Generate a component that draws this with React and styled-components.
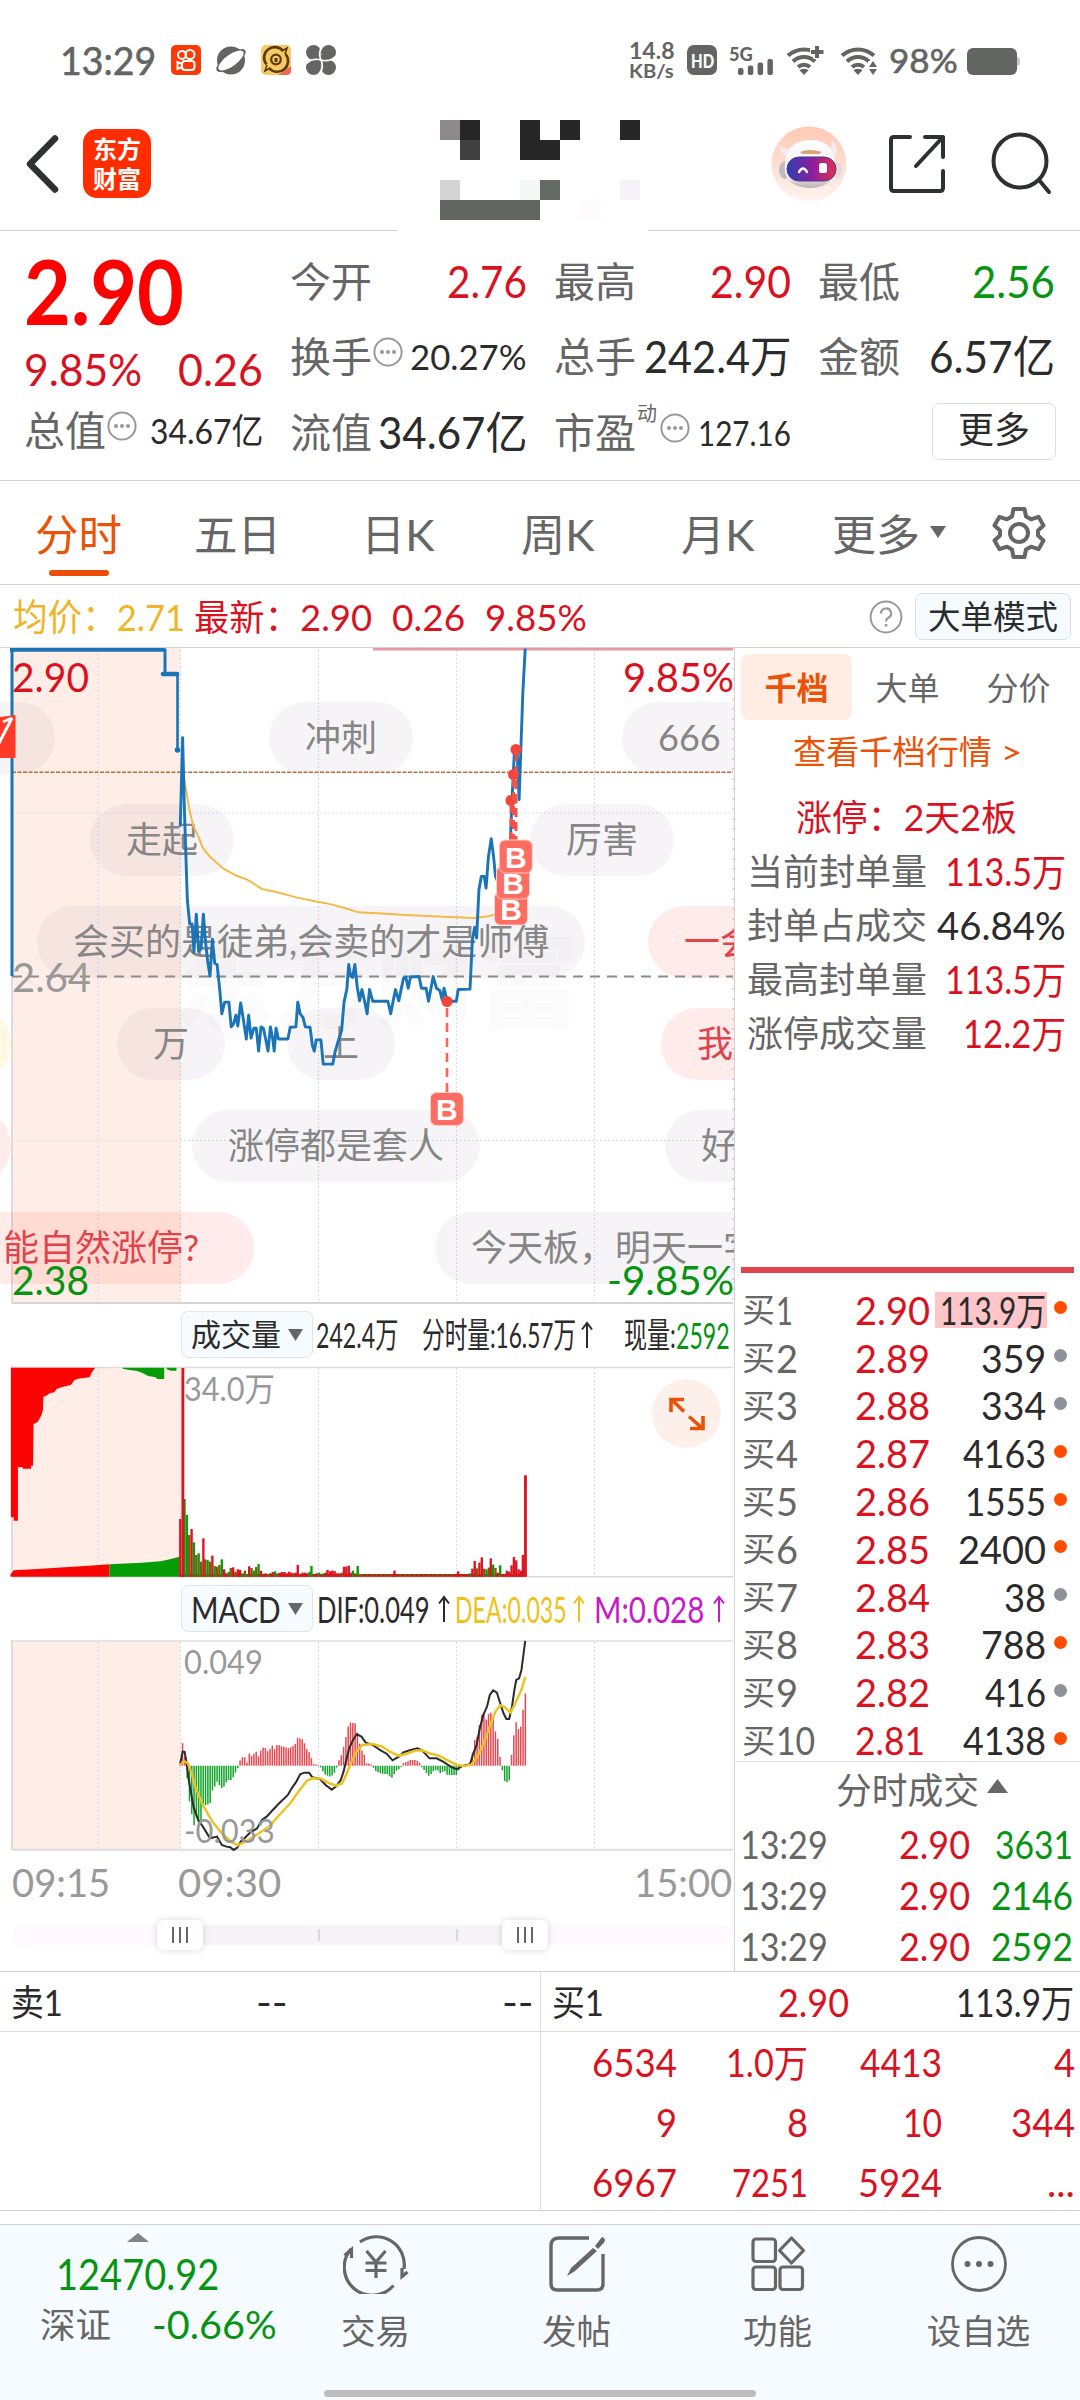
import React, { useLayoutEffect, useRef, useState } from "react";
import styled, { createGlobalStyle } from "styled-components";

const RED = "#d9121f";
const GREEN = "#069412";
const GRAY = "#666666";
const DARK = "#2b2b2b";
const ORANGE = "#ea5207";
const YELLOW = "#f0b429";
const LINE = "#d2d2d2";

// price chart, plotted on a 1568 x 1568 grid
const PRICE = [
  [382, 430], [387, 225], [391, 400], [397, 600], [402, 655], [407, 655], [411, 720], [416, 632], [421, 718],
  [426, 712], [431, 632], [435, 690], [440, 740], [445, 775], [450, 690], [455, 745], [460, 748], [466, 810],
  [470, 862], [476, 835], [485, 835], [490, 892], [495, 885], [500, 865], [504, 890], [510, 837], [515, 870],
  [522, 920], [527, 865], [532, 918], [538, 895], [543, 895], [548, 948], [553, 892], [558, 895], [563, 920],
  [568, 948], [573, 892], [578, 920], [581, 948], [585, 895], [590, 920], [610, 920], [615, 893], [627, 892],
  [631, 835], [636, 862], [642, 870], [647, 892], [657, 893], [662, 935], [666, 948], [670, 922], [680, 922],
  [685, 978], [705, 978], [710, 950], [718, 920], [724, 900], [729, 835], [735, 805], [739, 748], [743, 775],
  [747, 778], [752, 748], [757, 800], [762, 832], [767, 806], [773, 835], [778, 862], [783, 806], [790, 833],
  [822, 833], [828, 862], [833, 833], [838, 806], [845, 832], [855, 780], [860, 777], [865, 803], [870, 777],
  [888, 776], [893, 803], [903, 803], [908, 833], [913, 805], [918, 776], [925, 803], [932, 808], [937, 830],
  [941, 803], [948, 833], [967, 833], [971, 806], [996, 805], [1001, 690], [1006, 662], [1010, 687], [1015, 575],
  [1020, 545], [1026, 545], [1030, 572], [1035, 500], [1041, 458], [1046, 500], [1050, 545], [1056, 560],
  [1062, 632], [1070, 632], [1078, 560], [1085, 370], [1090, 258], [1096, 258], [1100, 368], [1108, 120], [1113, 20],
];
const AVERAGE = [
  [387, 300], [395, 350], [402, 395], [410, 430], [420, 452], [430, 480], [445, 500], [472, 526], [500, 543],
  [525, 553], [555, 574], [585, 581], [630, 594], [670, 603], [700, 609], [730, 618], [760, 628], [800, 630],
  [860, 634], [940, 638], [1005, 641], [1035, 637], [1060, 630],
];
const DIF = [
  [382, 550], [387, 515], [391, 515], [395, 545], [400, 600], [410, 680], [420, 720], [430, 740], [445, 775],
  [460, 770], [470, 795], [480, 800], [488, 802], [495, 810], [503, 803], [510, 785], [518, 775], [530, 758],
  [545, 745], [555, 720], [565, 710], [578, 690], [590, 672], [610, 645], [618, 625], [628, 605], [636, 583],
  [645, 578], [655, 578], [662, 592], [678, 597], [690, 615], [703, 629], [712, 620], [722, 600], [728, 575],
  [733, 545], [740, 505], [748, 480], [756, 463], [766, 470], [775, 488], [790, 495], [805, 510], [820, 522],
  [832, 541], [845, 530], [855, 517], [870, 510], [885, 505], [895, 512], [910, 535], [925, 535], [940, 546],
  [955, 560], [968, 568], [980, 558], [996, 553], [1003, 520], [1010, 495], [1016, 450], [1024, 405], [1032, 380],
  [1038, 345], [1045, 331], [1053, 338], [1060, 370], [1067, 400], [1073, 417], [1079, 417], [1085, 380],
  [1090, 330], [1094, 300], [1100, 295], [1105, 270], [1113, 183],
];
const DEA = [
  [382, 555], [390, 543], [398, 550], [405, 575], [415, 625], [430, 675], [450, 725], [470, 760], [490, 785],
  [503, 796], [520, 785], [540, 768], [570, 740], [590, 708], [615, 670], [635, 630], [650, 603], [662, 595],
  [680, 596], [695, 608], [712, 617], [725, 610], [735, 580], [745, 545], [755, 515], [768, 495], [790, 492],
  [810, 500], [830, 518], [845, 527], [860, 522], [880, 512], [895, 511], [910, 520], [930, 527], [950, 542],
  [968, 555], [985, 558], [1000, 553], [1015, 520], [1025, 490], [1040, 430], [1050, 395], [1060, 376],
  [1070, 382], [1082, 398], [1090, 375], [1100, 345], [1106, 325], [1113, 291],
];
const HIST = [
  [382, 545], [387, 488], [391, 520], [395, 570], [401, 660], [406, 700], [411, 737], [416, 712], [421, 730],
  [426, 722], [431, 680], [436, 675], [445, 672], [450, 632], [455, 620], [460, 605], [466, 618], [470, 625],
  [476, 618], [482, 600], [490, 600], [495, 590], [500, 575], [505, 562], [508, 543], [513, 532], [518, 530],
  [523, 550], [528, 520], [533, 528], [543, 515], [548, 530], [553, 510], [560, 500], [568, 515], [577, 497],
  [583, 510], [587, 494], [600, 500], [612, 505], [622, 497], [627, 490], [631, 472], [636, 476], [641, 478],
  [646, 492], [651, 510], [656, 518], [660, 535], [664, 552], [678, 556], [680, 565], [684, 573], [690, 585],
  [700, 590], [706, 585], [712, 570], [716, 550], [720, 535], [725, 520], [729, 495], [734, 465], [739, 432],
  [744, 426], [749, 430], [753, 430], [757, 455], [762, 490], [767, 512], [772, 525], [776, 550], [785, 551],
  [790, 560], [795, 572], [805, 580], [815, 582], [823, 583], [829, 597], [834, 585], [840, 572], [848, 565],
  [852, 555], [857, 545], [862, 548], [867, 540], [880, 540], [888, 545], [893, 560], [900, 572], [908, 588],
  [915, 580], [920, 570], [930, 572], [935, 585], [940, 568], [948, 585], [968, 585], [975, 560], [985, 556],
  [995, 550], [1000, 530], [1005, 480], [1010, 478], [1015, 440], [1020, 405], [1026, 402], [1030, 420],
  [1035, 402], [1041, 398], [1046, 420], [1050, 455], [1055, 478], [1060, 535], [1065, 575], [1070, 607],
  [1075, 607], [1080, 600], [1084, 525], [1089, 465], [1094, 425], [1098, 448], [1103, 445], [1108, 393], [1113, 343],
];
// x, top, colour (r = red, g = green, o = mixed)
const VOLUME = [
  [382, 657, "r"], [391, 597, "g"], [396, 645, "g"], [401, 705, "o"], [406, 687, "r"], [411, 727, "g"],
  [416, 765, "o"], [421, 760, "g"], [426, 785, "o"], [431, 715, "r"], [435, 778, "o"], [440, 780, "g"],
  [445, 785, "o"], [450, 767, "r"], [455, 798, "g"], [460, 800, "o"], [465, 795, "o"], [470, 778, "g"],
  [475, 808, "r"], [480, 820, "r"], [485, 816, "g"], [489, 804, "o"], [494, 802, "r"], [499, 815, "o"],
  [504, 808, "r"], [509, 810, "r"], [514, 820, "g"], [519, 812, "o"], [524, 822, "g"], [528, 799, "r"],
  [533, 804, "o"], [538, 812, "g"], [543, 801, "o"], [548, 792, "g"], [553, 812, "r"], [558, 822, "r"],
  [563, 820, "r"], [568, 822, "g"], [573, 820, "r"], [578, 816, "r"], [583, 814, "g"], [588, 820, "o"],
  [593, 818, "r"], [598, 816, "r"], [603, 816, "r"], [608, 820, "r"], [613, 815, "r"], [618, 818, "r"],
  [623, 820, "o"], [627, 818, "r"], [631, 795, "r"], [636, 822, "r"], [641, 818, "r"], [646, 818, "r"],
  [651, 820, "r"], [656, 816, "g"], [660, 798, "g"], [666, 822, "r"], [671, 820, "r"], [676, 818, "g"],
  [681, 822, "r"], [686, 820, "g"], [690, 818, "r"], [694, 810, "r"], [699, 814, "r"], [704, 812, "r"],
  [709, 813, "r"], [714, 820, "r"], [719, 820, "r"], [724, 818, "o"], [729, 800, "r"], [734, 800, "r"],
  [739, 797, "r"], [743, 818, "r"], [748, 812, "g"], [753, 820, "r"], [758, 798, "g"], [763, 822, "o"],
  [832, 822, "r"], [836, 812, "r"], [966, 822, "r"], [971, 814, "r"], [990, 822, "r"], [996, 820, "g"],
  [1001, 806, "r"], [1006, 783, "r"], [1011, 805, "o"], [1016, 788, "r"], [1021, 772, "r"], [1026, 806, "o"],
  [1031, 808, "g"], [1036, 803, "o"], [1040, 775, "r"], [1045, 794, "g"], [1050, 804, "o"], [1055, 818, "r"],
  [1060, 796, "g"], [1065, 822, "r"], [1070, 822, "r"], [1074, 812, "r"], [1079, 815, "r"], [1084, 796, "r"],
  [1089, 771, "r"], [1094, 781, "r"], [1099, 808, "r"], [1104, 812, "r"], [1108, 765, "r"],
];
const VOL_COLORS = { r: "#dc1420", g: "#0a9a0a", o: "#85560c" };
const GRID_X = [98, 180.5, 318.5, 456.5, 594.5];

const toPoints = (list) => list.map((p) => p.join(",")).join(" ");

const histBars = () => {
  const bars = [];
  for (let i = 0; i <= 150; i++) {
    const x = 382 + i * 4.875;
    let k = HIST.findIndex((p) => p[0] >= x);
    if (k < 0) k = HIST.length - 1;
    if (k < 1) k = 1;
    const [x0, y0] = HIST[k - 1];
    const [x1, y1] = HIST[k];
    bars.push([x, y0 + ((x - x0) / (x1 - x0)) * (y1 - y0)]);
  }
  return bars;
};

const TICKS = [
  ["1", "2.90", "113.9万", 1], ["2", "2.89", "359", 0], ["3", "2.88", "334", 0], ["4", "2.87", "4163", 1],
  ["5", "2.86", "1555", 1], ["6", "2.85", "2400", 1], ["7", "2.84", "38", 0], ["8", "2.83", "788", 1],
  ["9", "2.82", "416", 0], ["10", "2.81", "4138", 1],
];
const TICK_WIDTHS = { "113.9万": 106, "359": 65, "334": 65, "4163": 83, "1555": 81, "2400": 88, "38": 42, "788": 65, "416": 61, "4138": 83 };

const BUBBLES = [
  { x: -60, row: 0, w: 115, text: "" },
  { x: 269, row: 0, w: 144, text: "冲刺" },
  { x: 622, row: 0, w: 136, text: "666" },
  { x: 90, row: 1, w: 144, text: "走起" },
  { x: 530, row: 1, w: 144, text: "厉害" },
  { x: 37, row: 2, w: 548, text: "会买的是徒弟,会卖的才是师傅" },
  { x: 648, row: 2, w: 200, text: "一会", tone: "red" },
  { x: -60, row: 3, w: 71, text: "", tone: "yellow" },
  { x: 117, row: 3, w: 108, text: "万" },
  { x: 287, row: 3, w: 108, text: "上" },
  { x: 661, row: 3, w: 200, text: "我", tone: "red" },
  { x: -60, row: 4, w: 71, text: "", tone: "red" },
  { x: 192, row: 4, w: 288, text: "涨停都是套人" },
  { x: 665, row: 4, w: 200, text: "好" },
  { x: -33, row: 5, w: 287, text: "能自然涨停?", tone: "red" },
  { x: 435, row: 5, w: 400, text: "今天板，明天一字" },
];
const TONES = {
  gray: ["rgba(100, 60, 120, 0.06)", "#868686"],
  red: ["rgba(255, 60, 50, 0.1)", "#e0434c"],
  yellow: ["rgba(255, 210, 60, 0.15)", "#c90"],
};

// 20px blocks of the masked stock name: column, row, colour, span
const MASK = [
  [1, 1, "#8d8a8c"], [2, 1, "#262626"], [5, 1, "#262626"], [7, 1, "#262626"], [10, 1, "#262626"],
  [2, 2, "#404040"], [5, 2, "#262626"], [6, 2, "#262626"],
  [1, 4, "#d5d5d5"], [5, 4, "#f5f8f7"], [6, 4, "#666a67"], [10, 4, "#f5f3f7"],
  [1, 5, "#636563", 5], [8, 5, "#fffbfc"],
];

// text set to an exact advance width
const FitText = ({ w, children, ...rest }) => {
  const ink = useRef(null);
  const [scale, setScale] = useState(1);
  useLayoutEffect(() => {
    setScale(w / ink.current.offsetWidth);
  }, [w, children]);
  return (
    <FitBox $w={w} {...rest}>
      <FitInk ref={ink} style={{ transform: `scaleX(${scale})` }}>
        {children}
      </FitInk>
    </FitBox>
  );
};

const More = () => (
  <svg width="30" height="30" viewBox="0 0 30 30">
    <circle cx="15" cy="15" r="13.6" fill="none" stroke="#999" strokeWidth="2" />
    <circle cx="9" cy="15" r="2" fill="#999" />
    <circle cx="15" cy="15" r="2" fill="#999" />
    <circle cx="21" cy="15" r="2" fill="#999" />
  </svg>
);

const WifiArcs = () => (
  <g fill="none" stroke="#636563" strokeWidth="4">
    <path d="M2 10.5 A24 24 0 0 1 34 10.5" />
    <path d="M7 16.5 A16 16 0 0 1 29 16.5" />
    <path d="M12 22 A9 9 0 0 1 24 22" />
    <path d="M13.5 25.2 Q18 22.4 22.5 25.2 L18 30z" fill="#636563" stroke="none" />
  </g>
);

const StatusBar = () => (
  <Status>
    <FitText w={96} $size={39}>13:29</FitText>
    <AppIcons width="166" height="32" viewBox="0 0 166 32">
      <rect x="1" y="1" width="30" height="30" rx="5" fill="#f93a07" />
      <g fill="none" stroke="#fff" strokeWidth="2">
        <circle cx="12" cy="11" r="4" />
        <circle cx="20" cy="10.500" r="4.500" />
        <rect x="12" y="17" width="12.500" height="9" rx="3" />
        <path d="M12 20l-4.500-2v7l4.500-2" />
      </g>
      <circle cx="61" cy="16.500" r="14" fill="#636563" />
      <ellipse cx="61" cy="16.500" rx="17.500" ry="6.500" transform="rotate(-36 61 16.500)" fill="#636563" />
      <ellipse cx="61" cy="16.500" rx="15" ry="5.800" transform="rotate(-36 61 16.500)" fill="#fff" />
      <rect x="91" y="1" width="30" height="30" rx="5" fill="#f8ca66" />
      <path d="M108 31l13-9v5q0 4-4 4z" fill="#ee6b55" />
      <g fill="none" stroke="#5d3a0c" strokeWidth="2.600">
        <path d="M113 7A10.500 10.500 0 0 0 96.500 20.500M99 24A10.500 10.500 0 0 0 115.500 10" />
        <circle cx="106" cy="15.500" r="4.800" strokeWidth="2.200" />
        <path d="M106 14v4" strokeWidth="3" />
        <path d="M112 7l5-3-2 6M100 24l-5 3 2-6" strokeWidth="1.600" />
      </g>
      <g fill="#636563">
        <circle cx="143.500" cy="8.500" r="7.500" />
        <circle cx="158.500" cy="8.500" r="7.500" />
        <circle cx="143.500" cy="23.500" r="7.500" />
        <circle cx="158.500" cy="23.500" r="7.500" />
        <circle cx="151" cy="16" r="5" />
      </g>
      <path d="M153 1.500Q147.500 8 151 16Q154.500 24 149 30.500M136.500 19.500Q143 13.500 151 16Q159 18.500 165.500 12.500" fill="none" stroke="#fff" strokeWidth="1.700" />
    </AppIcons>
    <StatusRight>
      <NetSpeed>
        <FitText w={46} $size={22} $weight={700}>14.8</FitText>
        <FitText w={45} $size={18} $weight={700}>KB/s</FitText>
      </NetSpeed>
      <HdBadge><FitText w={23} $size={19} $weight={900}>HD</FitText></HdBadge>
      <Signal>
        <FitText w={24} $size={19} $weight={900}>5G</FitText>
        <svg width="36" height="16" viewBox="0 0 36 16" fill="#636563">
          <rect x="0" y="9" width="5.500" height="7" rx="2" />
          <rect x="9.800" y="6.500" width="5.500" height="9.500" rx="2" />
          <rect x="19.600" y="3.500" width="5.500" height="12.500" rx="2" />
          <rect x="29.400" y="0" width="5.500" height="16" rx="2" />
        </svg>
      </Signal>
      <svg width="40" height="31" viewBox="0 0 40 31">
        <WifiArcs />
        <path d="M31 0v14M24 7h14" stroke="#fff" strokeWidth="7" />
        <path d="M31 1v12M25 7h12.500" stroke="#636563" strokeWidth="4" />
      </svg>
      <WifiSecond width="38" height="31" viewBox="0 0 38 31">
        <WifiArcs />
        <path d="M28 16h9v15h-9z" fill="#fff" />
        <path d="M33 16l4 6h-8zM33 30l4-6h-8z" fill="#636563" />
      </WifiSecond>
      <FitText w={69} $size={33}>98%</FitText>
      <Battery><i /></Battery>
    </StatusRight>
  </Status>
);

const Header = () => (
  <HeaderBar>
    <BackIcon width="36" height="60" viewBox="0 0 36 60" fill="none" stroke="#2e3130" strokeWidth="6.500" strokeLinecap="round" strokeLinejoin="round">
      <path d="M30 4.500L5 30L30 55.500" />
    </BackIcon>
    <Logo>
      <span>东方</span>
      <span>财富</span>
    </Logo>
    <NameMask>
      {MASK.map(([c, r, color, span = 1]) => (
        <MaskBlock key={`${c}-${r}`} $c={c} $r={r} $span={span} $color={color} />
      ))}
    </NameMask>
    <Robot width="76" height="76" viewBox="0 0 76 76">
      <defs>
        <linearGradient id="halo" x1="0" y1="0" x2="0" y2="1">
          <stop offset="0" stopColor="#ffc9b3" />
          <stop offset="1" stopColor="#fff4ef" />
        </linearGradient>
        <linearGradient id="visor">
          <stop offset="0" stopColor="#2e3fb0" />
          <stop offset="0.5" stopColor="#8a1fa0" />
          <stop offset="1" stopColor="#e03050" />
        </linearGradient>
        <linearGradient id="helmet" x1="0" y1="0" x2="0" y2="1">
          <stop offset="0" stopColor="#fff" />
          <stop offset="0.75" stopColor="#f1eef1" />
          <stop offset="1" stopColor="#b9b1b8" />
        </linearGradient>
      </defs>
      <circle cx="38" cy="38" r="37.500" fill="url(#halo)" />
      <path d="M9 19Q8 29 17 30L22 22Q13 25 9 19zM61 14Q68 21 65 30L58 27Q61 20 61 14z" fill="#f2ecf0" />
      <ellipse cx="14" cy="44" rx="6" ry="9" fill="#c3bcc4" />
      <ellipse cx="66" cy="44" rx="5" ry="8" fill="#e2dadd" />
      <path d="M14 38Q15 15 39 14Q62 14 64 36Q68 60 40 62Q11 61 14 38z" fill="url(#helmet)" />
      <path d="M29 26q9-4 22 0l-3 2H31z" fill="#dda27c" />
      <rect x="16" y="31" width="49" height="24" rx="12" fill="url(#visor)" stroke="#4d3a8a" strokeWidth="1" />
      <path d="M28 46q4-7 8 0" fill="none" stroke="#fff" strokeWidth="2.400" strokeLinecap="round" />
      <rect x="48" y="37" width="8" height="10" rx="2.500" fill="#fff" />
    </Robot>
    <ShareIcon width="60" height="60" viewBox="0 0 60 60" fill="none" stroke="#2e3130" strokeWidth="4" strokeLinecap="round" strokeLinejoin="round">
      <path d="M22 3H6Q3 3 3 6v48q0 3 3 3h46q3 0 3-3V37M37 3h18v20M55 3L28 32" />
    </ShareIcon>
    <SearchIcon width="62" height="64" viewBox="0 0 62 64" fill="none" stroke="#2e3130" strokeWidth="4" strokeLinecap="round">
      <circle cx="29" cy="29" r="26.500" />
      <path d="M48 48L58 60" />
    </SearchIcon>
  </HeaderBar>
);

const QuotePanel = () => (
  <Quote>
    <QuoteCol>
      <QuoteRow $h={102} $up={8}><FitText w={160} $size={89} $color="#ff0000" $weight={700}>2.90</FitText></QuoteRow>
      <QuoteRow $h={48}>
        <FitText w={118} $size={44} $color={RED}>9.85%</FitText>
        <FitText w={85} $size={44} $color={RED}>0.26</FitText>
      </QuoteRow>
      <QuoteRow $h={76} $up={2}>
        <Label><FitText w={82} $size={41} $color={GRAY}>总值</FitText><More /></Label>
        <FitText w={113} $size={35}>34.67亿</FitText>
      </QuoteRow>
    </QuoteCol>
    <QuoteCol>
      <QuoteRow><FitText w={82} $size={41} $color={GRAY}>今开</FitText><FitText w={80} $size={44} $color={RED}>2.76</FitText></QuoteRow>
      <QuoteRow $up={2}>
        <Label><FitText w={82} $size={41} $color={GRAY}>换手</FitText><More /></Label>
        <FitText w={117} $size={35}>20.27%</FitText>
      </QuoteRow>
      <QuoteRow $up={2}><FitText w={82} $size={41} $color={GRAY}>流值</FitText><FitText w={149} $size={44}>34.67亿</FitText></QuoteRow>
    </QuoteCol>
    <QuoteCol>
      <QuoteRow><FitText w={82} $size={41} $color={GRAY}>最高</FitText><FitText w={81} $size={44} $color={RED}>2.90</FitText></QuoteRow>
      <QuoteRow $up={2}><FitText w={82} $size={41} $color={GRAY}>总手</FitText><FitText w={147} $size={44}>242.4万</FitText></QuoteRow>
      <QuoteRow $up={2}>
        <Label><FitText w={82} $size={41} $color={GRAY}>市盈</FitText><Sup>动</Sup><More /></Label>
        <FitText w={93} $size={35}>127.16</FitText>
      </QuoteRow>
    </QuoteCol>
    <QuoteCol>
      <QuoteRow><FitText w={82} $size={41} $color={GRAY}>最低</FitText><FitText w={83} $size={44} $color={GREEN}>2.56</FitText></QuoteRow>
      <QuoteRow $up={2}><FitText w={82} $size={41} $color={GRAY}>金额</FitText><FitText w={126} $size={44}>6.57亿</FitText></QuoteRow>
      <QuoteRow $end><MoreButton>更多</MoreButton></QuoteRow>
    </QuoteCol>
  </Quote>
);

const PeriodTabs = () => (
  <Periods>
    <Period $w={157} $active><FitText w={87} $size={43}>分时</FitText></Period>
    <Period $w={160}><FitText w={87} $size={43}>五日</FitText></Period>
    <Period $w={161}><FitText w={74} $size={43}>日K</FitText></Period>
    <Period $w={160}><FitText w={74} $size={43}>周K</FitText></Period>
    <Period $w={160}><FitText w={74} $size={43}>月K</FitText></Period>
    <Period $w={182}>
      <FitText w={88} $size={43}>更多</FitText>
      <svg width="16" height="12" viewBox="0 0 16 12"><path d="M0 0h16L8 12z" fill={GRAY} /></svg>
    </Period>
    <svg width="54" height="54" viewBox="0 0 54 54" fill="none" stroke={GRAY} strokeWidth="4" strokeLinejoin="round">
      <path d="M21.500 3h11l1.500 7.500 5 2.800 7.500-2.500 5 8.700-5.500 5v5l5.500 5-5 8.700-7.500-2.500-5 2.800L32.500 51h-11L20 43.500l-5-2.800-7.500 2.500-5-8.700 5.500-5v-5l-5.500-5 5-8.700 7.500 2.500 5-2.800z" />
      <circle cx="27" cy="27" r="9" />
    </svg>
  </Periods>
);

const InfoLine = () => (
  <Info>
    <FitText w={172} $size={37} $color={YELLOW}>均价：2.71</FitText>
    <InfoLatest>
      <FitText w={106} $size={36}>最新：</FitText>
      <FitText w={72} $size={37}>2.90</FitText>
      <FitText w={73} $size={37}>0.26</FitText>
      <FitText w={102} $size={37}>9.85%</FitText>
    </InfoLatest>
    <Help width="34" height="34" viewBox="0 0 34 34" fill="none" stroke="#999" strokeWidth="2">
      <circle cx="17" cy="17" r="15.400" />
      <path d="M12 13.500a5 5 0 1 1 7 4.500q-2 1-2 3.500" strokeWidth="2.200" />
      <path d="M17 24v2.600" strokeWidth="2.600" />
    </Help>
    <ModeButton>大单模式</ModeButton>
  </Info>
);

const GridLines = ({ h }) =>
  GRID_X.map((x) => <line key={x} x1={x} x2={x} y1="2" y2={h} stroke="#dcdce2" strokeWidth="1.200" strokeDasharray="2 2" />);

const PriceChart = () => (
  <PricePane>
    <svg width="734" height="656" viewBox="0 0 734 656">
      <rect x="12" y="0" width="168.500" height="655" fill="#ffeee7" />
      <Watermark x="172" y="372" textLength="408" lengthAdjust="spacingAndGlyphs">东方财富</Watermark>
      <GridLines h={655} />
      <path d="M12 165H733M12 492.500H733" stroke="#dcdce2" strokeWidth="1.200" strokeDasharray="2 2" />
      <path d="M733 10V655" stroke="#e4b4b8" strokeWidth="1" strokeDasharray="2 8" />
      <path d="M12 0V655" stroke="#dcdcdc" strokeWidth="2" />
      <path d="M12 655H733" stroke="#d5d5d8" strokeWidth="2" />
      <path d="M373 1.200H733" stroke="#e89aa0" strokeWidth="2.600" />
    </svg>
    {BUBBLES.map((b) => (
      <Bubble key={`${b.x}-${b.row}`} $x={b.x} $row={b.row} $w={b.w} $tone={b.tone || "gray"}>{b.text}</Bubble>
    ))}
    <Overlay width="734" height="656" viewBox="0 0 734 656" fill="none">
      <path d="M12 124.300H733" stroke="#b5703c" strokeWidth="1.400" strokeDasharray="4 1.500" />
      <path d="M12 328.500H733" stroke="#8c8c8c" strokeWidth="1.800" strokeDasharray="10 7" />
      <polyline points={toPoints(AVERAGE)} transform="translate(0 -8) scale(0.4719 0.4337)" stroke="#f5b94a" strokeWidth="2" vectorEffect="non-scaling-stroke" />
      <path d="M12 328V1" stroke="#1a74b8" strokeWidth="3" />
      <path d="M10 2H165V26" stroke="#1a74b8" strokeWidth="3" />
      <path d="M10 1.500H165" stroke="#1a74b8" strokeWidth="4" />
      <path d="M163 26H177.500V102" stroke="#1a74b8" strokeWidth="2.600" />
      <path d="M163 26H177" stroke="#1a74b8" strokeWidth="4.600" strokeLinecap="round" />
      <circle cx="177.500" cy="102" r="2.800" fill="#1a74b8" />
      <polyline points={toPoints(PRICE)} transform="translate(0 -8) scale(0.4719 0.4337)" stroke="#1a74b8" strokeWidth="2.900" strokeLinejoin="round" vectorEffect="non-scaling-stroke" />
      <g fill="#f5453a">
        <circle cx="447" cy="353.500" r="5.500" />
        <circle cx="516" cy="101.500" r="5.500" />
        <circle cx="513.500" cy="126.500" r="5.500" />
        <circle cx="511" cy="152.500" r="5.500" />
      </g>
      <path d="M447 360V446" stroke="#ff6257" strokeWidth="2.600" strokeDasharray="9 6" />
      <path d="M516 104V194M513.500 130V200M511 156V195" stroke="#f0524a" strokeWidth="3" strokeDasharray="9 5" />
      {[[511, 260.5], [513, 234.5], [515.8, 208.5], [446.9, 461]].map(([x, y]) => (
        <g key={y}>
          <rect x={x - 16.5} y={y - 16.5} width="33" height="33" rx="6" fill="#fd6d62" stroke="#ffd0cb" strokeWidth="1" />
          <MarkerText x={x} y={y + 11} textAnchor="middle">B</MarkerText>
        </g>
      ))}
      <path d="M0 69L15.500 67V110H0z" fill="#ff3a28" />
      <path d="M-2 97L12 70M3 74l9-4" stroke="#fff" strokeWidth="3" />
    </Overlay>
    <Corner $top={9} $left={12}><FitText w={77} $size={40} $color={RED}>2.90</FitText></Corner>
    <Corner $top={9} $right={0}><FitText w={111} $size={40} $color={RED}>9.85%</FitText></Corner>
    <Corner $top={309} $left={12}><FitText w={79} $size={40} $color="#999">2.64</FitText></Corner>
    <Corner $top={612} $left={12}><FitText w={77} $size={40} $color={GREEN}>2.38</FitText></Corner>
    <Corner $top={612} $right={0}><FitText w={127} $size={40} $color={GREEN}>-9.85%</FitText></Corner>
  </PricePane>
);

const Arrow = () => (
  <svg width="12" height="27" viewBox="0 0 12 27" fill="none" stroke="currentColor" strokeWidth="2">
    <path d="M6 27V2M1 8.500L6 2l5 6.500" />
  </svg>
);

const Indicator = ({ name, children }) => (
  <IndicatorBar>
    <Picker>
      <FitText w={90} $size={name === "MACD" ? 37 : 31}>{name}</FitText>
      <svg width="15" height="12" viewBox="0 0 15 12"><path d="M0 0h15L7.500 12z" fill={GRAY} /></svg>
    </Picker>
    {children}
  </IndicatorBar>
);

const VolumeChart = () => (
  <ChartPane>
    <svg width="734" height="212" viewBox="0 0 734 212">
      <rect x="12" y="2" width="168.500" height="208" fill="#ffeee7" />
      <GridLines h={210} />
      <path d="M12 1.500H733" stroke="#dedee0" strokeWidth="1.500" />
      <path d="M12 210.700H733" stroke="#d8d8da" strokeWidth="1.600" />
      <path d="M12 0V211" stroke="#dcdcdc" strokeWidth="2" />
      <g transform="translate(0 -66) scale(0.4719 0.3333)">
        <path d="M23 203V652H29V662H38V502H48V506H66V497H70L71 372L80 366L88 345L91 330L92 290L100 286L105 280L115 277L120 267L130 262L150 255L158 240L165 236L190 232L195 216L202 203z" fill="#fd0404" />
        <path d="M258 203L262 207L275 210L290 213L302 219L314 228L330 232L333 237H348V203zM352 203L355 209L362 212H374V203z" fill="#069c06" />
        <path d="M22 830V824L29 811L80 807L120 803L180 798L232 793V830z" fill="#fd0404" />
        <path d="M232 830V793L300 788L340 784L360 778L380 770V830z" fill="#069c06" />
        <path d="M380 826H1115" stroke="#c01a14" strokeWidth="8" />
        <path d="M765 826H968" stroke="#85560c" strokeWidth="8" strokeDasharray="5 5" />
        {VOLUME.map(([x, top, c]) => <rect key={x} x={x - 2.5} y={top} width="5" height={830 - top} fill={VOL_COLORS[c]} />)}
        <path d="M387.500 204V830M1113.500 526V830" stroke="#dc1420" strokeWidth="6" />
      </g>
    </svg>
    <Corner $top={6} $left={184}><FitText w={91} $size={33} $color="#999">34.0万</FitText></Corner>
    <Expand>
      <svg width="36" height="36" viewBox="0 0 36 36" fill="none" stroke={ORANGE} strokeWidth="3.600">
        <path d="M2 16V3.500H15M3 4L15 15.500M34 20V32.500H21M33 32L20 20.500" />
      </svg>
    </Expand>
  </ChartPane>
);

const MacdChart = () => (
  <ChartPane>
    <svg width="734" height="212" viewBox="0 0 734 212" fill="none">
      <rect x="12" y="1" width="168.500" height="209" fill="#ffeee7" />
      <GridLines h={210} />
      <path d="M12 1H733" stroke="#dedee0" strokeWidth="1.600" />
      <path d="M12 209.700H733" stroke="#dedee0" strokeWidth="2" />
      <path d="M12 0V210" stroke="#dcdcdc" strokeWidth="2" />
      <g transform="translate(0 -60) scale(0.4719 0.3333)">
        {histBars().map(([x, y]) => (
          <path key={x} d={`M${x} 557V${y}`} stroke={y < 557 ? "#e5484f" : "#12a52b"} strokeWidth="3.200" />
        ))}
        <polyline points={toPoints(DIF)} stroke="#2b2b2b" strokeWidth="2" vectorEffect="non-scaling-stroke" />
        <polyline points={toPoints(DEA)} stroke="#eec21c" strokeWidth="2.400" vectorEffect="non-scaling-stroke" />
      </g>
    </svg>
    <Corner $top={6} $left={184}><FitText w={79} $size={32} $color="#999">0.049</FitText></Corner>
    <Corner $top={175} $left={184}><FitText w={91} $size={32} $color="#999">-0.033</FitText></Corner>
  </ChartPane>
);

const OrderBook = () => (
  <Book>
    <BookTabs>
      <BookTab $active>千档</BookTab>
      <BookTab>大单</BookTab>
      <BookTab>分价</BookTab>
    </BookTabs>
    <BookLink><FitText w={199} $size={33}>查看千档行情</FitText><FitText w={21} $size={33}>&gt;</FitText></BookLink>
    <LimitTitle><FitText w={221} $size={36}>涨停：2天2板</FitText></LimitTitle>
    <LimitList>
      <LimitRow><span>当前封单量</span><FitText w={121} $size={38} $color={RED}>113.5万</FitText></LimitRow>
      <LimitRow><span>封单占成交</span><FitText w={129} $size={38}>46.84%</FitText></LimitRow>
      <LimitRow><span>最高封单量</span><FitText w={121} $size={38} $color={RED}>113.5万</FitText></LimitRow>
      <LimitRow><span>涨停成交量</span><FitText w={103} $size={38} $color={RED}>12.2万</FitText></LimitRow>
    </LimitList>
    <RedRule />
    <TickList>
      {TICKS.map(([n, price, vol, big]) => (
        <TickRow key={n}>
          <TickName>买<FitText w={n === "10" ? 39 : n === "1" ? 17 : 22} $size={38} $color={GRAY}>{n}</FitText></TickName>
          <FitText w={n === "10" ? 70 : 75} $size={38} $color={RED}>{price}</FitText>
          <TickVolume $hot={n === "1"}><FitText w={TICK_WIDTHS[vol]} $size={38}>{vol}</FitText></TickVolume>
          <TickDot $big={big} />
        </TickRow>
      ))}
    </TickList>
    <DealsHead>
      <FitText w={143} $size={36}>分时成交</FitText>
      <svg width="21" height="14" viewBox="0 0 21 14"><path d="M0 14L10.500 0L21 14z" fill={GRAY} /></svg>
    </DealsHead>
    {["3631", "2146", "2592"].map((v) => (
      <DealRow key={v}>
        <FitText w={88} $size={38} $color={GRAY}>13:29</FitText>
        <FitText w={71} $size={38} $color={RED}>2.90</FitText>
        <FitText w={v === "3631" ? 78 : 82} $size={38} $color={GREEN}>{v}</FitText>
      </DealRow>
    ))}
  </Book>
);

const QueuePanel = () => (
  <Queue>
    <QueueSide $left>
      <QueueHead>
        <FitText w={52} $size={36}>卖1</FitText>
        <FitText w={32} $size={40}>--</FitText>
        <FitText w={32} $size={40}>--</FitText>
      </QueueHead>
    </QueueSide>
    <QueueSide>
      <QueueHead>
        <FitText w={52} $size={36}>买1</FitText>
        <FitText w={71} $size={38} $color={RED}>2.90</FitText>
        <FitText w={118} $size={38}>113.9万</FitText>
      </QueueHead>
      <QueueGrid>
        {[["6534", 85], ["1.0万", 82], ["4413", 82], ["4", 21], ["9", 21], ["8", 21], ["10", 39], ["344", 64], ["6967", 85], ["7251", 76], ["5924", 84], ["...", 28]].map(([v, w]) => (
          <QueueCell key={v}><FitText w={w} $size={38} $color={RED}>{v}</FitText></QueueCell>
        ))}
      </QueueGrid>
    </QueueSide>
  </Queue>
);

const BottomNav = () => (
  <Bottom>
    <BottomRow>
      <IndexBox>
        <svg width="22" height="9" viewBox="0 0 22 9"><path d="M0 9L11 0L22 9z" fill="#808488" /></svg>
        <FitText w={163} $size={42} $color={GREEN}>12470.92</FitText>
        <IndexLine>
          <FitText w={71} $size={35} $color={GRAY}>深证</FitText>
          <FitText w={125} $size={39} $color={GREEN}>-0.66%</FitText>
        </IndexLine>
      </IndexBox>
      <NavItem>
        <svg width="66" height="60" viewBox="0 0 66 60" fill="none" stroke={GRAY} strokeWidth="3.200">
          <path d="M17 8A28 28 0 0 1 61 35M50.500 51.500A28 28 0 0 1 8 15" />
          <path d="M1.500 21.500L8.500 15.500V24M64.500 38L59 42.500V34" />
          <path d="M23.500 17L33 28l9.500-11M33 28v16M22.500 29h21M22.500 36.500h21" />
        </svg>
        <span>交易</span>
      </NavItem>
      <NavItem>
        <svg width="60" height="60" viewBox="0 0 60 60" fill="none" stroke={GRAY} strokeWidth="3.400">
          <path d="M42 4H12Q4 4 4 12v38q0 6 6 6h40q6 0 6-6V20" />
          <path d="M48 12L55 3Q59 4 57.500 8L51 15zM46 14l4 3L28 37l-8 5 4-8z" fill={GRAY} stroke="none" />
        </svg>
        <span>发帖</span>
      </NavItem>
      <NavItem>
        <svg width="60" height="60" viewBox="0 0 60 60" fill="none" stroke={GRAY} strokeWidth="3.200" strokeLinejoin="round">
          <rect x="5" y="5" width="22.500" height="22.500" rx="3" />
          <rect x="5" y="33" width="22.500" height="22.500" rx="3" />
          <rect x="32" y="33" width="22.500" height="22.500" rx="3" />
          <path d="M43.500 4L55.500 16.500L43.500 29L31.500 16.500z" />
        </svg>
        <span>功能</span>
      </NavItem>
      <NavItem>
        <svg width="60" height="60" viewBox="0 0 60 60" fill={GRAY}>
          <circle cx="30" cy="30" r="26.500" fill="none" stroke={GRAY} strokeWidth="2.800" />
          <circle cx="18.500" cy="30" r="3" />
          <circle cx="30" cy="30" r="3" />
          <circle cx="41.500" cy="30" r="3" />
        </svg>
        <span>设自选</span>
      </NavItem>
    </BottomRow>
    <HomeBar />
  </Bottom>
);

const App = () => (
  <>
    <GlobalStyle />
    <Page>
      <StatusBar />
      <Header />
      <QuotePanel />
      <PeriodTabs />
      <InfoLine />
      <Main>
        <Charts>
          <PriceChart />
          <Indicator name="成交量">
            <Legend $x={3}><FitText w={82} $size={35}>242.4万</FitText></Legend>
            <Legend $x={24}><FitText w={154} $size={35}>分时量:16.57万</FitText><Arrow /></Legend>
            <Legend $x={31}>
              <FitText w={52} $size={35}>现量:</FitText>
              <FitText w={54} $size={36} $color={GREEN}>2592</FitText>
            </Legend>
          </Indicator>
          <VolumeChart />
          <Indicator name="MACD">
            <Legend $x={4} $gap={8}><FitText w={113} $size={36}>DIF:0.049</FitText><Arrow /></Legend>
            <Legend $x={5} $gap={6} $color="#efc119"><FitText w={112} $size={36}>DEA:0.035</FitText><Arrow /></Legend>
            <Legend $x={9} $gap={9} $color="#c819c8"><FitText w={110} $size={36}>M:0.028</FitText><Arrow /></Legend>
          </Indicator>
          <MacdChart />
          <TimeAxis>
            <FitText w={98} $size={39}>09:15</FitText>
            <FitText w={103} $size={39}>09:30</FitText>
            <FitText w={98} $size={39}>15:00</FitText>
          </TimeAxis>
          <Slider>
            <SliderPart $w={166} />
            <SliderPart $w={345} $on><Tick $x={138} /><Tick $x={276} /></SliderPart>
            <SliderPart $w={206} />
            <Handle $x={157}><i /><i /><i /></Handle>
            <Handle $x={502}><i /><i /><i /></Handle>
          </Slider>
        </Charts>
        <OrderBook />
      </Main>
      <QueuePanel />
      <Gap />
      <BottomNav />
    </Page>
  </>
);

export default App;

const GlobalStyle = createGlobalStyle`
  * {
    box-sizing: border-box;
  }
  body {
    margin: 0;
    background: #fff;
  }
  svg {
    display: block;
    flex: none;
  }
`;

const Page = styled.div`
  width: 1080px;
  height: 2400px;
  overflow: hidden;
  display: flex;
  flex-direction: column;
  background: #fff;
  color: ${DARK};
  font-family: Lato, "Noto Sans CJK SC", sans-serif;
  font-size: 36px;
  line-height: 1;
`;

const FitBox = styled.span`
  display: inline-block;
  flex: none;
  width: ${(p) => p.$w}px;
  white-space: nowrap;
  font-size: ${(p) => p.$size}px;
  font-weight: ${(p) => p.$weight || 400};
  color: ${(p) => p.$color || "inherit"};
`;

const FitInk = styled.span`
  display: inline-block;
  transform-origin: left center;
`;

const Status = styled.div`
  display: flex;
  align-items: center;
  height: 100px;
  padding: 20px 60px 0;
  color: #636563;
  -webkit-text-stroke: 0.6px #636563;
`;

const AppIcons = styled.svg`
  margin-left: 14px;
`;

const StatusRight = styled.div`
  display: flex;
  align-items: center;
  margin-left: auto;
`;

const NetSpeed = styled.div`
  display: flex;
  flex-direction: column;
  width: 58px;
  -webkit-text-stroke: 0;
`;

const HdBadge = styled.div`
  display: flex;
  align-items: center;
  justify-content: center;
  width: 30px;
  height: 30px;
  margin-right: 12px;
  border-radius: 7px;
  background: #636563;
  color: #fff;
  -webkit-text-stroke: 0;
`;

const Signal = styled.div`
  display: flex;
  flex-direction: column;
  width: 57px;
  height: 32px;
  -webkit-text-stroke: 0;
  svg {
    margin: -4px 0 0 9px;
  }
`;

const WifiSecond = styled.svg`
  margin: 0 11px 0 14px;
`;

const Battery = styled.div`
  display: flex;
  align-items: center;
  width: 50px;
  height: 27px;
  margin: 3px 3px 0 9px;
  border-radius: 6px;
  background: #636563;
  i {
    width: 3px;
    height: 9px;
    margin-left: 50px;
    flex: none;
    border-radius: 0 3px 3px 0;
    background: #c8c8c8;
  }
`;

const HeaderBar = styled.header`
  display: flex;
  align-items: center;
  height: 131px;
  border-bottom: 1px solid ${LINE};
  padding-left: 25px;
`;

const BackIcon = styled.svg`
  margin-top: -3px;
`;

const Logo = styled.div`
  display: flex;
  flex-direction: column;
  align-items: center;
  justify-content: center;
  width: 68px;
  height: 69px;
  margin: -3px 0 0 22px;
  border-radius: 14px;
  background: #ff2d00;
  color: #fff;
  font-size: 24px;
  font-weight: 700;
  line-height: 30px;
`;

const NameMask = styled.div`
  display: grid;
  grid-template-columns: repeat(10, 20px);
  grid-template-rows: repeat(5, 20px);
  align-self: flex-start;
  width: 251px;
  height: 131px;
  margin-left: 246px;
  padding: 20px 0 0 43px;
  background: #fff;
  flex: none;
`;

const MaskBlock = styled.i`
  grid-column: ${(p) => p.$c} / span ${(p) => p.$span};
  grid-row: ${(p) => p.$r};
  background: ${(p) => p.$color};
`;

const Robot = styled.svg`
  margin: -3px 0 0 123px;
`;

const ShareIcon = styled.svg`
  margin: -3px 0 0 41px;
`;

const SearchIcon = styled.svg`
  margin: -3px 0 0 43px;
`;

const Quote = styled.section`
  display: flex;
  gap: 27px;
  height: 250px;
  padding: 12px 0 0 24px;
  border-bottom: 1px solid ${LINE};
`;

const QuoteCol = styled.div`
  width: 239px;
  &:nth-child(n + 2) {
    width: 237px;
  }
`;

const QuoteRow = styled.div`
  display: flex;
  align-items: center;
  justify-content: ${(p) => (p.$end ? "flex-end" : "space-between")};
  height: ${(p) => p.$h || 76}px;
  padding-bottom: ${(p) => p.$up || 0}px;
`;

const Label = styled.div`
  display: flex;
  align-items: center;
  svg {
    margin: -8px 0 0 1px;
  }
`;

const Sup = styled.sup`
  width: 22px;
  margin: -38px 0 0 1px;
  font-size: 20px;
  line-height: 20px;
  color: ${GRAY};
`;

const MoreButton = styled.button`
  width: 124px;
  height: 57px;
  margin: 0 -1px 4px 0;
  padding: 0 0 4px;
  border: 1px solid #dedede;
  border-radius: 7px;
  background: #fff;
  color: ${DARK};
  font: 36px/1 Lato, "Noto Sans CJK SC", sans-serif;
`;

const Periods = styled.nav`
  display: flex;
  align-items: center;
  height: 104px;
  border-bottom: 1px solid ${LINE};
`;

const Period = styled.div`
  display: flex;
  flex: none;
  align-items: center;
  justify-content: center;
  gap: 10px;
  width: ${(p) => p.$w}px;
  height: 100%;
  padding-top: 4px;
  color: ${(p) => (p.$active ? ORANGE : GRAY)};
  position: relative;
  &::after {
    content: "";
    display: ${(p) => (p.$active ? "block" : "none")};
    position: absolute;
    left: 49px;
    bottom: 8px;
    width: 60px;
    height: 6px;
    border-radius: 3px;
    background: #ee4d08;
  }
  svg {
    margin-top: -5px;
  }
  & + svg {
    margin-left: 12px;
  }
`;

const Info = styled.div`
  display: flex;
  align-items: center;
  height: 63px;
  padding: 1px 9px 0 13px;
  border-bottom: 1px solid ${LINE};
`;

const InfoLatest = styled.div`
  display: flex;
  align-items: center;
  margin-left: 9px;
  color: ${RED};
  span + span {
    margin-right: 20px;
  }
`;

const Help = styled.svg`
  margin-left: auto;
`;

const ModeButton = styled.div`
  display: flex;
  align-items: center;
  justify-content: center;
  width: 156px;
  height: 47px;
  margin-left: 12px;
  padding-top: 1px;
  border: 1px solid #dcdfe6;
  border-radius: 7px;
  background: #f6fbff;
  font-size: 32.5px;
`;

const Main = styled.main`
  display: flex;
  height: 1324px;
  border-bottom: 1px solid ${LINE};
`;

const Charts = styled.div`
  width: 735px;
  border-right: 1px solid ${LINE};
`;

const PricePane = styled.div`
  position: relative;
  height: 656px;
  overflow: hidden;
`;

const ChartPane = styled.div`
  position: relative;
  height: 212px;
`;

const Overlay = styled.svg`
  position: absolute;
  top: 0;
  left: 0;
`;

const Watermark = styled.text`
  font-size: 104px;
  font-weight: 900;
  fill: rgba(60, 50, 70, 0.02);
`;

const MarkerText = styled.text`
  font-family: "Liberation Sans", sans-serif;
  font-size: 30px;
  font-weight: 700;
  fill: #fff;
`;

const Bubble = styled.span`
  position: absolute;
  top: ${(p) => 54 + p.$row * 102}px;
  left: ${(p) => p.$x}px;
  width: ${(p) => p.$w}px;
  height: 72px;
  padding-left: 36px;
  border-radius: 36px;
  font-size: 36px;
  line-height: 70px;
  white-space: nowrap;
  background: ${(p) => TONES[p.$tone][0]};
  color: ${(p) => TONES[p.$tone][1]};
`;

const Corner = styled.div`
  position: absolute;
  top: ${(p) => p.$top}px;
  ${(p) => (p.$right !== undefined ? `right: ${p.$right}px;` : `left: ${p.$left}px;`)}
  display: flex;
`;

const IndicatorBar = styled.div`
  display: flex;
  align-items: center;
  height: 62px;
  padding: 0 0 1px 181px;
`;

const Picker = styled.div`
  display: flex;
  align-items: center;
  gap: 7px;
  width: 132px;
  height: 47px;
  padding-left: 9px;
  border: 1px solid #dfe5ec;
  border-radius: 7px;
  background: #f6fbff;
  flex: none;
`;

const Legend = styled.div`
  display: flex;
  align-items: center;
  margin-left: ${(p) => p.$x}px;
  color: ${(p) => p.$color || DARK};
  svg {
    margin-left: ${(p) => p.$gap || 5}px;
  }
`;

const Expand = styled.div`
  position: absolute;
  top: 13px;
  left: 652px;
  display: flex;
  align-items: center;
  justify-content: center;
  width: 69px;
  height: 69px;
  border-radius: 50%;
  background: #fdf0ea;
`;

const TimeAxis = styled.div`
  display: flex;
  align-items: center;
  height: 60px;
  padding: 0 2px 0 12px;
  color: #999;
  & > span:nth-child(2) {
    margin-left: 68px;
  }
  & > span:last-child {
    margin-left: auto;
  }
`;

const Slider = styled.div`
  position: relative;
  display: flex;
  height: 20px;
  margin: 13px 0 0 14px;
`;

const SliderPart = styled.div`
  position: relative;
  width: ${(p) => p.$w}px;
  height: 20px;
  border-radius: ${(p) => (p.$on ? 0 : 8)}px;
  background: ${(p) => (p.$on ? "#f6f3f7" : "#fdf9fd")};
`;

const Tick = styled.i`
  position: absolute;
  left: ${(p) => p.$x}px;
  top: 4px;
  width: 2px;
  height: 12px;
  background: #d8d8dc;
`;

const Handle = styled.div`
  position: absolute;
  top: -5px;
  left: ${(p) => p.$x - 14}px;
  display: flex;
  align-items: center;
  justify-content: center;
  gap: 5px;
  width: 46px;
  height: 30px;
  border-radius: 6px;
  background: #fff;
  box-shadow: 0 0 6px rgba(70, 40, 80, 0.2);
  i {
    width: 2px;
    height: 16px;
    background: #666;
  }
`;

const Book = styled.aside`
  width: 345px;
  padding: 6px 6px 0 6px;
`;

const BookTabs = styled.div`
  display: flex;
`;

const BookTab = styled.div`
  width: 111px;
  height: 66px;
  border-radius: 8px;
  text-align: center;
  font-size: 32px;
  line-height: 67px;
  font-weight: ${(p) => (p.$active ? 700 : 400)};
  background: ${(p) => (p.$active ? "#ffede4" : "none")};
  color: ${(p) => (p.$active ? ORANGE : GRAY)};
`;

const BookLink = styled.div`
  display: flex;
  align-items: center;
  gap: 9px;
  height: 60px;
  padding: 3px 0 0 52px;
  color: ${ORANGE};
`;

const LimitTitle = styled.div`
  display: flex;
  align-items: center;
  height: 64px;
  padding: 10px 0 0 55px;
  color: ${RED};
`;

const LimitList = styled.div`
  height: 421px;
  padding: 0 8px 0 6px;
`;

const LimitRow = styled.div`
  display: flex;
  align-items: center;
  justify-content: space-between;
  height: 54px;
  color: ${DARK};
  & > span:first-child {
    color: ${GRAY};
  }
`;

const RedRule = styled.div`
  height: 6px;
  margin-top: 2px;
  background: #e0434b;
`;

const TickList = styled.div`
  height: 489px;
  margin: 0 -6px;
  padding: 13px 13px 0 7px;
  border-bottom: 1px solid #e4e4e4;
`;

const TickRow = styled.div`
  display: grid;
  grid-template-columns: 113px 76px 115px 28px;
  align-items: center;
  height: 47.8px;
`;

const TickName = styled.div`
  display: flex;
  align-items: center;
  gap: 1px;
  font-size: 33px;
  color: ${GRAY};
`;

const TickVolume = styled.div`
  justify-self: end;
  display: flex;
  justify-content: flex-end;
  margin-right: -1px;
  padding: 0 1px 0 5px;
  line-height: 36px;
  color: ${DARK};
  background: ${(p) => (p.$hot ? "#ffc6ca" : "none")};
`;

const TickDot = styled.i`
  width: 13px;
  height: 13px;
  margin: -4px 0 0 8px;
  border-radius: 50%;
  background: ${(p) => (p.$big ? "#ff4d00" : "#8d9199")};
`;

const DealsHead = styled.div`
  display: flex;
  align-items: center;
  justify-content: center;
  gap: 8px;
  height: 56px;
  padding-left: 28px;
  color: ${GRAY};
  svg {
    margin-top: -8px;
  }
`;

const DealRow = styled.div`
  display: grid;
  grid-template-columns: 159px 71px 1fr;
  align-items: center;
  height: 51px;
  margin-left: -1px;
  & > span:last-child {
    justify-self: end;
    margin-right: 1px;
  }
`;

const Queue = styled.section`
  display: flex;
  height: 239px;
  border-bottom: 1px solid ${LINE};
`;

const QueueSide = styled.div`
  width: ${(p) => (p.$left ? 541 : 539)}px;
  border-right: ${(p) => (p.$left ? "1px solid #e0e0e0" : "0")};
`;

const QueueHead = styled.div`
  display: grid;
  grid-template-columns: 1fr 1fr 1fr;
  align-items: center;
  height: 60px;
  padding: 1px 6px 0 11px;
  border-bottom: 1px solid #dcdcdc;
  & > span:nth-child(2) {
    justify-self: center;
  }
  & > span:nth-child(3) {
    justify-self: end;
  }
`;

const QueueGrid = styled.div`
  display: grid;
  grid-template-columns: 136px 131px 134px 133px;
  grid-auto-rows: 60px;
`;

const QueueCell = styled.div`
  display: flex;
  align-items: center;
  justify-content: flex-end;
`;

const Gap = styled.div`
  height: 14px;
  border-bottom: 1px solid ${LINE};
`;

const Bottom = styled.footer`
  display: flex;
  flex: 1;
  flex-direction: column;
  align-items: center;
  background: #f6fbff;
`;

const BottomRow = styled.div`
  display: flex;
  width: 100%;
  height: 165px;
`;

const IndexBox = styled.div`
  display: flex;
  flex-direction: column;
  align-items: center;
  width: 275px;
  padding-top: 8px;
  & > span {
    margin-top: 11px;
  }
`;

const IndexLine = styled.div`
  display: flex;
  align-items: center;
  justify-content: space-between;
  width: 237px;
  height: 40px;
  margin: 9px 0 0 42px;
`;

const NavItem = styled.div`
  display: flex;
  flex-direction: column;
  align-items: center;
  gap: 20px;
  width: 201px;
  padding-top: 9px;
  color: ${GRAY};
  font-size: 34.5px;
`;

const HomeBar = styled.div`
  width: 432px;
  height: 7px;
  border-radius: 4px;
  background: #bdbdbd;
`;
